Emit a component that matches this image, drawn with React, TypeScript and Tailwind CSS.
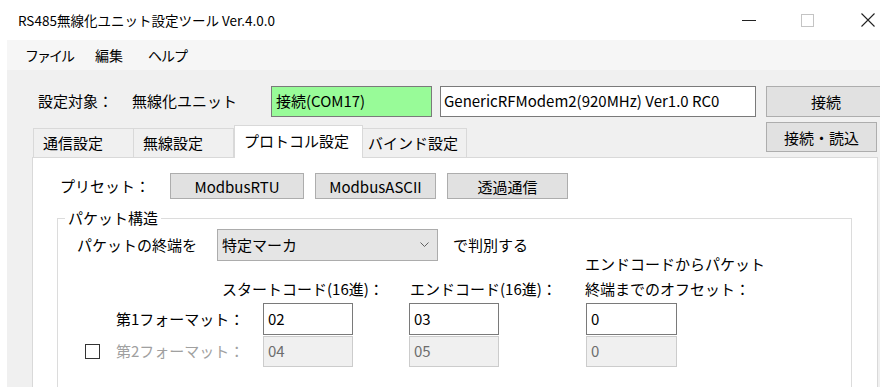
import React from 'react';
import clsx from 'clsx';

const Btn = ({ children, className }: { children: React.ReactNode; className?: string }) => (
  <div
    className={clsx(
      'flex shrink-0 items-center justify-center border border-[#adadad] bg-[#e1e1e1] text-[15px] leading-none text-black',
      className
    )}
  >
    {children}
  </div>
);

const Tab = ({ label, active, className }: { label: string; active?: boolean; className?: string }) => (
  <div
    className={clsx(
      'flex shrink-0 items-center border border-[#d9d9d9] text-[15px]',
      active ? 'relative z-10 h-[33px] border-b-0 bg-white pb-[2px]' : 'h-[30px] border-b-0 bg-[#f0f0f0]',
      className
    )}
  >
    {label}
  </div>
);

const TextBox = ({ value, disabled, className }: { value: string; disabled?: boolean; className?: string }) => (
  <div
    className={clsx(
      'flex shrink-0 items-center pl-[4px] text-[15px]',
      disabled
        ? 'h-[31px] border border-[#cccccc] bg-[#f0f0f0] text-[#6d6d6d]'
        : 'h-[32px] border border-[#7a7a7a] bg-white text-black',
      className
    )}
  >
    {value}
  </div>
);

export default function App() {
  return (
    <div className="flex h-[387px] w-[880px] flex-col overflow-hidden bg-white font-['Noto_Sans_CJK_JP','Liberation_Sans',sans-serif] text-black">
      {/* title bar */}
      <div className="flex h-[40px] shrink-0 items-center">
        <span className="ml-[18px] text-[13.5px]">RS485無線化ユニット設定ツール Ver.4.0.0</span>
        <div className="ml-auto flex items-center">
          <svg width="14" height="14" viewBox="0 0 14 14">
            <line x1="0" y1="7.5" x2="14" y2="7.5" stroke="#222" strokeWidth="1" />
          </svg>
          <svg width="13" height="13" viewBox="0 0 13 13" className="ml-[45px]">
            <rect x="0.5" y="0.5" width="12" height="12" fill="none" stroke="#c4c4c4" strokeWidth="1" />
          </svg>
          <svg width="14" height="14" viewBox="0 0 14 14" className="ml-[47px] mr-[5px]">
            <path d="M0.5 0.5 L13.5 13.5 M13.5 0.5 L0.5 13.5" stroke="#222" strokeWidth="1.1" />
          </svg>
        </div>
      </div>

      <div className="ml-[7px] flex flex-1 flex-col bg-[#f0f0f0]">
        {/* menu */}
        <div className="flex h-[30px] shrink-0 items-center bg-[#f6f6f6] pl-[18px] text-[14px]">
          <span className="w-[70px] tracking-[-2px]">ファイル</span>
          <span className="w-[53px]">編集</span>
          <span className="tracking-[-1px]">ヘルプ</span>
        </div>

        {/* target row */}
        <div className="mt-[16px] flex h-[31px] shrink-0 items-center pl-[31px] text-[15px]">
          <span className="w-[94px] shrink-0">設定対象：</span>
          <span className="w-[139px] shrink-0">無線化ユニット</span>
          <div className="flex h-[31px] w-[161px] shrink-0 items-center border border-[#7a7a7a] bg-[#98fb98] pl-[4px]">
            接続(COM17)
          </div>
          <div className="ml-[8px] flex h-[31px] w-[316px] shrink-0 items-center border border-[#7a7a7a] bg-white pl-[3px]">
            GenericRFModem2(920MHz) Ver1.0 RC0
          </div>
          <Btn className="ml-[10px] h-[31px] w-[120px]">接続</Btn>
        </div>

        {/* tabs row */}
        <div className="-mb-px mt-[5px] flex h-[36px] shrink-0 items-end pl-[26px]">
          <Tab label="通信設定" className="w-[101px] pl-[9px]" />
          <Tab label="無線設定" className="w-[100px] border-l-0 pl-[9px]" />
          <Tab label="プロトコル設定" active className="w-[129px] pl-[9px]" />
          <Tab label="バインド設定" className="w-[104px] border-l-0 pl-[5px]" />
          <Btn className="mb-auto ml-auto mr-[3px] h-[30px] w-[111px]">接続・読込</Btn>
        </div>

        {/* panel */}
        <div className="ml-[25px] flex w-[846px] flex-1 flex-col border border-b-0 border-[#d9d9d9] bg-white">
          <div className="mt-[15px] flex h-[26px] items-center pl-[27px] text-[15px]">
            <span className="w-[110px] shrink-0">プリセット：</span>
            <Btn className="h-[26px] w-[134px]">ModbusRTU</Btn>
            <Btn className="ml-[11px] h-[26px] w-[121px]">ModbusASCII</Btn>
            <Btn className="ml-[11px] h-[26px] w-[121px]">透過通信</Btn>
          </div>

          <fieldset className="ml-[24px] mt-[8px] w-[795px] flex-1 border border-b-0 border-[#dcdcdc]">
            <legend className="ml-[7px] px-[3px] text-[15px] leading-[22px]">パケット構造</legend>

            <div className="flex h-[32px] items-center pl-[19px] text-[15px]">
              <span className="w-[140px] shrink-0">パケットの終端を</span>
              <div className="flex h-[32px] w-[221px] shrink-0 items-center border border-[#acacac] bg-[#e5e5e5] pl-[4px] pr-[8px]">
                <span>特定マーカ</span>
                <svg width="9" height="6" viewBox="0 0 9 6" className="ml-auto">
                  <path d="M0.5 0.5 L4.5 4.5 L8.5 0.5" fill="none" stroke="#606060" strokeWidth="1" />
                </svg>
              </div>
              <span className="ml-[15px]">で判別する</span>
            </div>

            <div className="-mt-[10px] flex items-end pl-[164px] text-[15px] leading-[25px]">
              <span className="w-[188px] shrink-0">スタートコード(16進)：</span>
              <span className="w-[175px] shrink-0">エンドコード(16進)：</span>
              <div className="flex flex-col">
                <span>エンドコードからパケット</span>
                <span>終端までのオフセット：</span>
              </div>
            </div>

            <div className="mt-[2px] flex items-center pl-[58px] text-[15px]">
              <span className="w-[147px] shrink-0">第1フォーマット：</span>
              <TextBox value="02" className="w-[90px]" />
              <TextBox value="03" className="ml-[56px] w-[90px]" />
              <TextBox value="0" className="ml-[87px] w-[91px]" />
            </div>

            <div className="mt-[1px] flex items-center pl-[27px] text-[15px]">
              <div className="h-[15px] w-[15px] shrink-0 border border-[#333333] bg-white" />
              <span className="ml-[16px] w-[147px] shrink-0 text-[#a0a0a0]">第2フォーマット：</span>
              <TextBox value="04" disabled className="w-[90px]" />
              <TextBox value="05" disabled className="ml-[56px] w-[90px]" />
              <TextBox value="0" disabled className="ml-[87px] w-[91px]" />
            </div>
          </fieldset>
        </div>
      </div>
    </div>
  );
}
